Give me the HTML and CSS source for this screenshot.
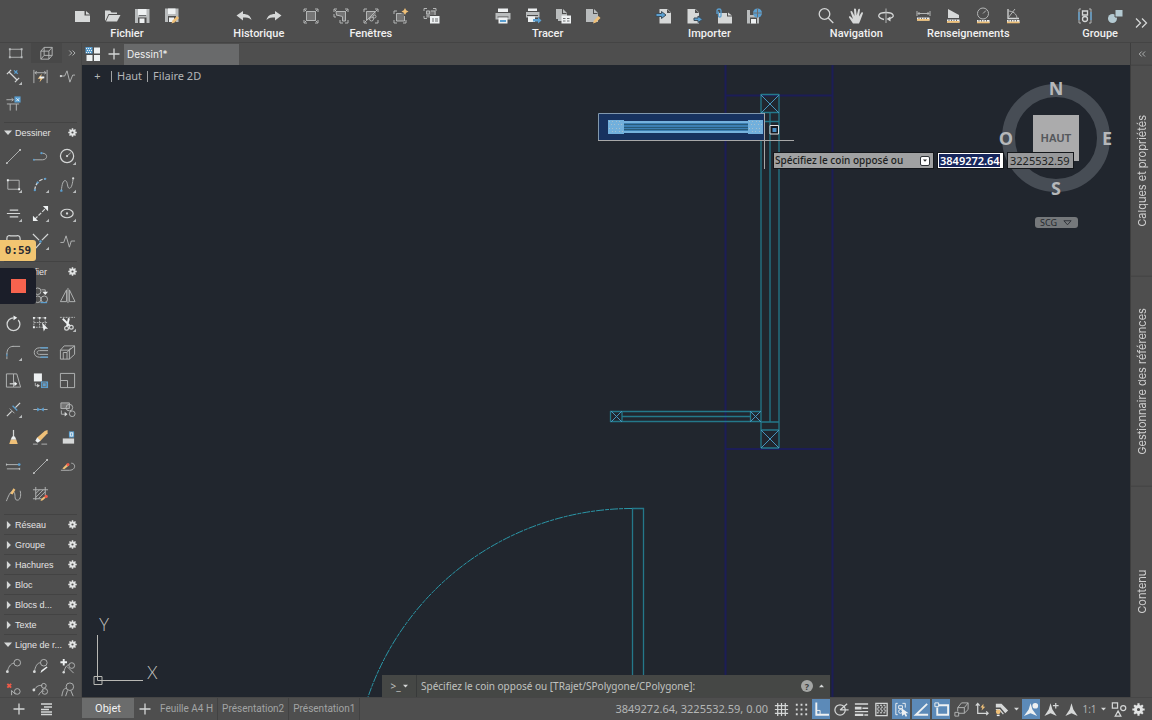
FILE: index.html
```html
<!DOCTYPE html>
<html lang="fr">
<head>
<meta charset="utf-8">
<title>Dessin1</title>
<link rel="stylesheet" href="styles.css">
</head>
<body>
<svg class="sprite" aria-hidden="true">
  <defs>
    <!-- file -->
    <symbol id="new" viewBox="0 0 18 18"><path class="f" d="M2 4h9.500v4.500H17V15H2z"/><path class="f" d="M13 4l4 3.500h-4z"/></symbol>
    <symbol id="open" viewBox="0 0 18 18"><path class="f" d="M2 3.500h5l1.500 2H14V7H5.500L2.500 13.500H2z"/><path class="f" d="M6 8h11.500l-3.500 6.500H3z"/></symbol>
    <symbol id="save" viewBox="0 0 18 18"><path class="g" d="M2 2h14.500v14H2z"/><path class="w" d="M5 2h8.500v6H5z"/><path class="k" d="M5 10.500h8.500V16H5z"/><path class="w" d="M6.500 11.500h5V16h-5z"/><path class="s" d="M6 8.500h7"/></symbol>
    <symbol id="saveas" viewBox="0 0 18 18"><path class="g" d="M2 1.500h13.500v13.500H2z"/><path class="w" d="M5 1.500h7.500v5.500H5z"/><path class="k" d="M5 9h8v6H5z"/><path class="w" d="M6 10.500h5V15H6z"/><path class="o" d="M8.500 16.500l1-3 4.500-4.500 2 2-4.500 4.500z"/></symbol>
    <symbol id="undo" viewBox="0 0 18 18"><path class="f" d="M1.500 8.500L8 4v3c5 0 7.500 2 8.500 6-2.500-2.500-5-2.500-8.500-2.500v3z"/></symbol>
    <symbol id="redo" viewBox="0 0 18 18"><path class="f" d="M16.500 8.500L10 4v3c-5 0-7.500 2-8.500 6 2.500-2.500 5-2.500 8.500-2.500v3z"/></symbol>
    <!-- viewports -->
    <symbol id="vp1" viewBox="0 0 18 18"><path class="d" d="M4.500 4.500h9v9h-9z"/><path class="l" d="M2 5V2h3M13 2h3v3M16 13v3h-3M5 16H2v-3M2.500 2.500l2 2M15.500 2.500l-2 2M15.500 15.500l-2-2M2.500 15.500l2-2M4.500 4.500h9v9h-9z"/></symbol>
    <symbol id="vp2" viewBox="0 0 18 18"><path class="d" d="M4 4h10v10h-3V9H4z"/><path class="l" d="M2 5V2h3M13 2h3v3M16 13v3h-3M2 7v3h2M4 4.500h9.500V14h-3V9.500L4.500 8zM8 13v3h3M2.500 2.500l2 2M15.500 2.500l-2 2"/></symbol>
    <symbol id="vp3" viewBox="0 0 18 18"><path class="d" d="M4 4h10v3l-5 5-5 2z"/><path class="l" d="M2 5V2h3M13 2h3v3M16 13v3h-3M5 16H2v-3M4.500 13.500v-9h9L4.500 13.500zM15.500 2.500l-2 2M2.500 15.500l2-2"/><circle class="l" cx="9.500" cy="12" r="2"/><circle class="l" cx="12.500" cy="9.500" r="1.500"/></symbol>
    <symbol id="vp4" viewBox="0 0 18 18"><path class="d" d="M4 6h8v8H4z"/><path class="l" d="M2 7V4h3M14 13v3h-3M5 16H2v-3M4.500 6.500h5M12.500 9v5h-8V6.500"/><path class="o" d="M13 1l1.200 2.300L16.500 4.500l-2.300 1.200L13 8l-1.200-2.300L9.500 4.500l2.300-1.200z"/></symbol>
    <symbol id="vp5" viewBox="0 0 18 18"><path class="d" d="M4 3.500h10V8H8v3H4z"/><path class="l" d="M2 4V1.500h3M11 1.500h3V4M2 9v2.500h3M4.500 4h3v3h-3zM9 4h4v4M4.500 9h3"/><path class="w" d="M8 9h9.500v7.500H8z"/><path class="s" d="M10 12h2M13 12h3M10 14h2M13 14h3"/></symbol>
    <!-- plot -->
    <symbol id="print" viewBox="0 0 18 18"><path class="w" d="M4 1.500h10V5H4z"/><path class="g" d="M1.500 6h15v6.500h-15z"/><path class="k" d="M3.500 9.500h11v1h-11z"/><path class="w" d="M4.500 10.500h9v6h-9z"/><path class="b" d="M6 13h6v2H6z"/></symbol>
    <symbol id="print2" viewBox="0 0 18 18"><path class="w" d="M4 1.500h9V4H4z"/><path class="g" d="M2 5h13.500v5.500H2z"/><path class="k" d="M3 8h11v1H3z"/><path class="w" d="M4 9.500h7v5.500H4z"/><path class="b" d="M9 12h5v-2l3.500 3.500L14 16.500v-2H9z"/></symbol>
    <symbol id="page" viewBox="0 0 18 18"><path class="g" d="M2 2h7l4 4v8H4V12H2z"/><path class="k" d="M9 2v4h4l-1 1H8V2z"/><path class="w" d="M7.500 8.500h9.500v8H7.500z"/><path class="s" d="M9 11.500h2.500M13 11.500h2.500M9 14h2.500M13 14h2.500"/></symbol>
    <symbol id="pageedit" viewBox="0 0 18 18"><path class="g" d="M2 2h8l4 4v9H2z"/><path class="k" d="M10 2v4h4l-1 1H9V2z"/><path class="o" d="M9 16.500l1-3 4.500-4.500 2 2-4.500 4.500z"/></symbol>
    <!-- import -->
    <symbol id="imp" viewBox="0 0 18 18"><path class="f" d="M4.500 2h8l3.500 3.500V16.500H4.500z"/><path class="k" d="M12 2v4h4z"/><path class="bo" d="M1 6.500h5.500v-2L11 8l-4.500 3.500v-2H1z"/></symbol>
    <symbol id="exp" viewBox="0 0 18 18"><path class="f" d="M2.500 2h8l3.500 3.500V16.500H2.500z"/><path class="k" d="M10 2v4h4z"/><path class="bo" d="M9 11h4V9l4.500 3.500L13 15.500v-2H9z"/></symbol>
    <symbol id="attach" viewBox="0 0 18 18"><path class="f" d="M3 6h9v3.500h5v7H3z"/><path class="f" d="M13 5.500L17 8.500h-4z"/><path class="bl" d="M2 7V3.500c0-2 4-2 4 0V9c0 1.500-2.500 1.500-2.500 0V4.500"/></symbol>
    <symbol id="saveweb" viewBox="0 0 18 18"><path class="g" d="M2 3h12v13.500H2z"/><path class="k" d="M5 3h6v5H5zM5 10.500h7v6H5z"/><path class="w" d="M6 12h5v4.500H6z"/><circle class="b" cx="12.500" cy="6" r="4.500"/><path class="s" d="M8 6h9M12.500 1.500v9"/></symbol>
    <!-- navigation -->
    <symbol id="lens" viewBox="0 0 18 18"><circle class="t" cx="7.500" cy="7" r="5.300"/><path class="t" d="M11.300 11l5 5"/></symbol>
    <symbol id="hand" viewBox="0 0 18 18"><path class="f" d="M6 16.500L2 10.500c-.5-1.200.8-1.700 1.500-1L6 12 3.500 5c-.2-1.200 1.300-1.500 1.700-.4L7.500 9 7 2.500C7 1.200 8.700 1 9 2.300L9.700 8.500l1.500-6c.4-1.200 2-.8 1.700.5L12 9.500l2.300-3.800c.7-1 2-.3 1.600.8L13.500 13l-1.500 3.500z"/></symbol>
    <symbol id="orbit" viewBox="0 0 18 18"><path class="t" d="M7 12.500C-1.500 10.500 1 5.500 9 5.500s10.500 5 2 6.500"/><path class="l" d="M9 1.500V16"/><path class="f" d="M13.500 9.500v5L9.500 12z"/></symbol>
    <!-- inquiry -->
    <symbol id="dist" viewBox="0 0 18 18"><path class="l" d="M3 4v5M16 4v5M4 6.500h11M5.500 5L4 6.500 5.500 8M13.500 5L15 6.500 13.500 8"/><use href="#ruler"/></symbol>
    <symbol id="area" viewBox="0 0 18 18"><path class="f" d="M4 2l11 6v3H4z"/><use href="#ruler" y="2"/></symbol>
    <symbol id="radius" viewBox="0 0 18 18"><circle class="l" cx="9" cy="6.500" r="5.500"/><path class="l" d="M9 6.500l3-3"/><use href="#ruler" y="2.500"/></symbol>
    <symbol id="angle" viewBox="0 0 18 18"><path class="t" d="M4 2v9.500h11"/><path class="l" d="M4 4c5 0 9 3 9 7.500M4 11L11 2"/><use href="#ruler" y="2.500"/></symbol>
    <g id="ruler"><path class="w" d="M3 10.500h12.500v3H3z"/><path class="o" d="M3 12h12.500v1.800H3z"/><path class="s" d="M5 10.500v1.500M7.500 10.500v1.500M10 10.500v1.500M12.500 10.500v1.500"/></g>
    <!-- groups -->
    <symbol id="group" viewBox="0 0 18 18"><path class="l" d="M5 2H3v14h2M13 2h2v14h-2"/><path class="bl" d="M3 5v8M15 5v8"/><path class="t" d="M6.500 4h5v4h-5z"/><circle class="t" cx="9" cy="12" r="2.500"/></symbol>
    <symbol id="ungroup" viewBox="0 0 18 18"><circle class="pb" cx="6.500" cy="11.500" r="4.500"/><path class="pb st" d="M9 2.500h8v7.500H9z"/></symbol>
    <!-- palette -->
    <symbol id="p-rect" viewBox="0 0 18 18"><path class="l" d="M3 4.500h12.500v8.500H3z"/><path class="g" d="M2 3.500h2v2H2zM14.500 3.500h2v2h-2zM2 12h2v2H2zM14.500 12h2v2h-2z"/></symbol>
    <symbol id="p-cube" viewBox="0 0 18 18"><path class="l" d="M3 6.500h8.500V15H3zM3 6.500l3.500-4H15l-3.500 4M15 2.500V11l-3.500 4M6.500 2.500V11H15M6.500 11L3 15"/></symbol>
    <symbol id="p-dim" viewBox="0 0 18 18"><path class="t" d="M4.500 4.500l8 8M2 6.500L6.500 2M10.500 15l4.500-4.500"/><path class="bl" d="M9.500 2.500l4 3.500M13 2.500L10 6"/><use href="#more"/></symbol>
    <symbol id="p-quick" viewBox="0 0 18 18"><path class="l" d="M2 2v14M16 2v14M3 5h12M5 3.500L3 5l2 1.500M13 3.500L15 5l-2 1.500"/><path class="o" d="M10.500 6L6 11.500h3L8 15l4.500-5.500H9.500z"/><path class="w" d="M8 9h5v2H8z"/></symbol>
    <symbol id="p-jog" viewBox="0 0 18 18"><path class="l" d="M2 8.500h4L8.500 3l3 12 3-7.500H17"/><circle class="f" cx="2" cy="8.500" r="1.200"/></symbol>
    <symbol id="p-space" viewBox="0 0 18 18"><path class="l" d="M1.500 5h7M7 3.500L9 5 7 6.500M2 9.500h13M5.500 9.500v7M12 9.500v7"/><path class="b" d="M10 1.500h6.500v6.500H10z"/><path class="lw" d="M12 3.500l3 3M15 3.500l-3 3"/></symbol>
    <path id="more" class="g" d="M18 14.500V18h-3.500z"/>
    <symbol id="p-line" viewBox="0 0 18 18"><path class="l" d="M2 16L16 2"/><circle class="f" cx="16" cy="2" r="1"/><circle class="f" cx="2" cy="16" r="1"/></symbol>
    <symbol id="p-pline" viewBox="0 0 18 18"><path class="l" d="M2 12.500h9c6 0 6-7 0-7"/><circle class="b" cx="10" cy="5.500" r="1.200"/><circle class="b" cx="2" cy="12.500" r="1"/></symbol>
    <symbol id="p-circle" viewBox="0 0 18 18"><circle class="t" cx="8.500" cy="8.500" r="7"/><path class="l" d="M8.500 8.500l4-3.500"/><circle class="f" cx="8.500" cy="8.500" r="1.200"/><use href="#more"/></symbol>
    <symbol id="p-box" viewBox="0 0 18 18"><path class="l" d="M3 4.500h12V14H3z"/><path class="w" d="M2 3.500h2v2H2zM14 13h2v2h-2z"/><use href="#more"/></symbol>
    <symbol id="p-arc" viewBox="0 0 18 18"><path class="t" d="M3 15C3 9 8 3 14 3" stroke-dasharray="4 1.500"/><circle class="b" cx="3" cy="15" r="1.200"/><circle class="b" cx="6" cy="7" r="1.200"/><circle class="b" cx="14" cy="3" r="1.200"/><use href="#more"/></symbol>
    <symbol id="p-spline" viewBox="0 0 18 18"><path class="l" d="M2.500 15.500C3 9 4.500 4 7 5s1.500 8 4 8 3.500-6 4-11"/><circle class="b" cx="2.500" cy="15.500" r="1.300"/><circle class="f" cx="15" cy="2.500" r="1.200"/><use href="#more"/></symbol>
    <symbol id="p-mline" viewBox="0 0 18 18"><path class="t" d="M5 5.500h9M2 9h14M5 12.500h9"/><use href="#more"/></symbol>
    <symbol id="p-ray" viewBox="0 0 18 18"><path class="t" d="M3 15L15 3" stroke-dasharray="4 1.500"/><path class="w" d="M17 1v5.500L11.500 1zM1 17v-5.500L6.500 17z"/><use href="#more"/></symbol>
    <symbol id="p-ell" viewBox="0 0 18 18"><ellipse class="t" cx="8.500" cy="9" rx="6.500" ry="4.500"/><circle class="f" cx="8.500" cy="9" r="1.200"/><use href="#more"/></symbol>
    <symbol id="p-rev" viewBox="0 0 18 18"><path class="t" d="M2 8V5.500C2 2.500 5 2.500 6 3h6c2-.5 4 0 4 3v6c0 3-3 3-4 3H5c-3 0-3-2-3-3z"/></symbol>
    <symbol id="p-point" viewBox="0 0 18 18"><path class="t" d="M1 1l6.500 6.500M17 1l-6.500 6.500M9 10.500L4 16"/><circle class="b" cx="9" cy="9" r="1.300"/><use href="#more"/></symbol>
    <symbol id="p-wave" viewBox="0 0 18 18"><path class="l" d="M1.500 10H5l2.500-7 3.500 12 2-6.500h4"/></symbol>
    <symbol id="p-move" viewBox="0 0 18 18"><path class="l" d="M9 2v14M2 9h14"/></symbol>
    <symbol id="p-copy" viewBox="0 0 18 18"><circle class="l" cx="6" cy="4.500" r="3.500"/><circle class="l" cx="6" cy="13" r="3.500"/><circle class="l" cx="13" cy="13" r="3.500"/><path class="l" d="M10 3h4v3"/><path class="w" d="M11 5h6l-3 3.500z"/><path class="bl" d="M9 16.500h7"/></symbol>
    <symbol id="p-mirror" viewBox="0 0 18 18"><path class="l" d="M8 3L1.500 15.500H8zM11 3l6 12.500h-6zM9.500 1v16"/></symbol>
    <symbol id="p-rot" viewBox="0 0 18 18"><path class="t" d="M9 3a6.800 6.800 0 1 0 6.800 6.800c0-1.800-.8-3.300-1.800-4.500"/><path class="w" d="M9 .5l4 2.500-4 2.500z"/></symbol>
    <symbol id="p-stretch" viewBox="0 0 18 18"><path class="l" stroke-dasharray="2 1" d="M2 3h12v10H2zM2 8h14M8 3v10"/><path class="w" d="M1 2h2v2H1zM13 2h2v2h-2zM1 12h2v2H1zM7 2h2v2H7zM10.500 8l6.500 6.500h-3L12.500 17.500z"/></symbol>
    <symbol id="p-trim" viewBox="0 0 18 18"><path class="l" stroke-dasharray="2 1" d="M1 2.500h16"/><path class="tw" d="M4 4l8 8M10.500 3.500L8.500 12"/><circle class="t" cx="8" cy="14" r="2"/><circle class="t" cx="13" cy="13" r="2"/><use href="#more"/></symbol>
    <symbol id="p-fillet" viewBox="0 0 18 18"><path class="l" d="M2 16v-3M8 2.500h8"/><path class="bl" d="M2 13V10"/><path class="l" d="M2 11C2 6 4 2.500 9 2.500"/><use href="#more"/></symbol>
    <symbol id="p-offset" viewBox="0 0 18 18"><path class="l" d="M17 4H8C.5 4 .5 14 8 14h9M17 7H8c-3.500 0-3.500 4 0 4h9"/><path class="bl" d="M9 4h8M9 14h8"/></symbol>
    <symbol id="p-solid" viewBox="0 0 18 18"><path class="l" d="M1.500 6.500H11V16H1.500zM1.500 6.500l4-4.500H16.500L11 6.500M16.500 2v9L11 16M4.500 16V9h4v7M8.500 9l4-5"/></symbol>
    <symbol id="p-taper" viewBox="0 0 18 18"><path class="l" d="M1.500 2H9v14H1.500zM9 2h3.500l4 14H9"/><path class="t" d="M5 12.500h7"/><path class="w" d="M10 10l3 2.500-3 2.500z"/></symbol>
    <symbol id="p-block" viewBox="0 0 18 18"><path class="w" d="M2 1.500h8.500v8.500H2z"/><path class="b" d="M9.500 10h7.500v7H9.500z"/><path class="l" d="M3.500 11.500v3H7"/><path class="f" d="M5.500 12.500l3 2-3 2z"/><path class="s" d="M11 11.500h4v4h-4z"/></symbol>
    <symbol id="p-scale" viewBox="0 0 18 18"><path class="l" d="M1.500 1.500h15v15h-15zM1.500 9h7.500v7.500"/></symbol>
    <symbol id="p-break" viewBox="0 0 18 18"><path class="t" d="M2 16l5-5M11 7l5-5"/><path class="bl" d="M8 5l5 5"/><path class="l" d="M5 8l5 5"/><use href="#more"/></symbol>
    <symbol id="p-join" viewBox="0 0 18 18"><path class="l" d="M1.500 9h15"/><path class="b" d="M5.500 7L9 9l-3.500 2zM12.500 7L9 9l3.500 2z"/></symbol>
    <symbol id="p-align" viewBox="0 0 18 18"><path class="d" d="M2 2h9v6H2z"/><path class="l" d="M2 2h9v6H2zM2.500 10v4H8"/><circle class="l" cx="11" cy="7" r="3.500"/><circle class="l" cx="14" cy="13.500" r="3"/><path class="f" d="M6 11.500l3 2.500-3 2.500z"/></symbol>
    <symbol id="p-brush" viewBox="0 0 18 18"><path class="t" d="M9 1v8"/><path class="w" d="M7.500 8h3l1.500 3.500H6z"/><path class="o" d="M6 11.500h6l1.500 4.500h-9z"/></symbol>
    <symbol id="p-erase" viewBox="0 0 18 18"><path class="o" d="M5 9.500L13.500 2 16.500 1v3.500L8.500 13z"/><path class="w" d="M3.500 12.500l2-3.500 3.500 3.500-3 2z"/><path class="l" d="M1 16h5M10 16h6"/></symbol>
    <symbol id="p-ext" viewBox="0 0 18 18"><path class="f" d="M4 10h12v5.500H4z"/><path class="b" d="M10.500 2.500H16V9h-5.500z"/><path class="lw" d="M12 4h2.500v3.500H12z"/></symbol>
    <symbol id="p-over" viewBox="0 0 18 18"><path class="l" d="M2 7h12M2 11.500h14"/><path class="g" d="M1 5.500l2 1.500-2 1.500zM16 10l-2 1.500 2 1.500z"/><circle class="b" cx="15" cy="7" r="1.500"/></symbol>
    <symbol id="p-pedit" viewBox="0 0 18 18"><path class="l" d="M2 13h9c7 0 7-7.500 2-7.500"/><path class="o" d="M3.500 11l5-5 2 2-5 4z"/><circle class="r" cx="9.500" cy="7" r="1.600"/></symbol>
    <symbol id="p-sedit" viewBox="0 0 18 18"><path class="l" d="M1.500 16C3 12 6 4 9 6s0 9 4 9 4-7 3-10"/><path class="o" d="M5.500 8L9 2.500 11 4 8 9z"/></symbol>
    <symbol id="p-hatch" viewBox="0 0 18 18"><path class="l" d="M4 1v14M14 1v9M1 4h16M1 13.500h9M4 8l4-4M4 12l8-8M7 13l7-7"/><path class="o" d="M9 16l1-2.500 3-2.500 1.500 1.500-3 2.500z"/><circle class="r" cx="15" cy="11" r="1.700"/></symbol>
    <symbol id="p-lead" viewBox="0 0 18 18"><path class="l" d="M2.500 14.500C3.500 10 5.500 6 9.500 5.500"/><circle class="l" cx="13" cy="5" r="3.500"/><circle class="f" cx="2.500" cy="14.500" r="1.500"/></symbol>
    <symbol id="p-leadedit" viewBox="0 0 18 18"><path class="l" d="M2.500 14.500C3.500 9 5.500 5 9 5"/><circle class="l" cx="12.500" cy="5" r="3.500"/><circle class="f" cx="2.500" cy="14.500" r="1.500"/><path class="w" d="M9 16l1-3 5.500-4 1 1-5 4z"/></symbol>
    <symbol id="p-leadadd" viewBox="0 0 18 18"><path class="tw" d="M5 1v7M1.500 4.500h7"/><path class="l" d="M5 15C7 8 9 7 11 7.500M8.500 9l7 7"/><circle class="l" cx="13.500" cy="8" r="3"/><circle class="f" cx="5" cy="15" r="1.300"/></symbol>
    <symbol id="p-leaddel" viewBox="0 0 18 18"><path class="rl" d="M2.500 2l4 4M6.500 2l-4 4"/><path class="l" d="M7 14V9l4 4"/><circle class="l" cx="13" cy="10" r="3"/></symbol>
    <symbol id="p-leadal" viewBox="0 0 18 18"><path class="l" d="M2 8.500C5 4 8 3 11 4M7 14c2-4 4-5 6-4"/><circle class="l" cx="12.500" cy="4" r="2.500"/><circle class="l" cx="13.500" cy="10" r="3"/><circle class="f" cx="2" cy="8.500" r="1.500"/></symbol>
    <symbol id="p-leadcol" viewBox="0 0 18 18"><path class="l" d="M3 15C4 8 6 6 8 7M9 9l-2 6M12.500 9l2.500 6"/><circle class="l" cx="11.500" cy="5" r="4"/></symbol>
    <symbol id="gear" viewBox="0 0 18 18"><path class="teeth" d="M9 .5v17M.5 9h17M3 3l12 12M15 3L3 15"/><circle class="hub" cx="9" cy="9" r="4.200"/></symbol>
    <symbol id="tri-r" viewBox="0 0 6 10"><path class="f" d="M1 0l5 5-5 5z"/></symbol>
    <symbol id="tri-d" viewBox="0 0 10 6"><path class="f" d="M0 .5h10L5 6z"/></symbol>
    <symbol id="plus" viewBox="0 0 18 18"><path class="t" d="M9 3.500v11M3.500 9h11"/></symbol>
    <symbol id="tiles" viewBox="0 0 18 18"><path class="b" d="M1.500 2h7v6.500h-7z"/><path class="w" d="M10 2.500h6v6h-6zM2.500 10h6v6h-6zM10 10h6v6h-6z"/><path class="lw" stroke-dasharray="1 1" d="M2 3.500h6M3 5.500h6M2 7.500h6"/></symbol>
    <symbol id="dbl-r" viewBox="0 0 18 18"><path class="t" d="M4 4.500L8.500 9 4 13.500M10 4.500l4.500 4.500L10 13.500"/></symbol>
    <symbol id="dbl-l" viewBox="0 0 18 18"><path class="t" d="M8.500 4.500L4 9l4.500 4.500M14.500 4.500L10 9l4.500 4.500"/></symbol>
    <symbol id="list" viewBox="0 0 18 18"><path class="t" d="M4 4h11M7 7h8M4 9.500h8M4 12h11M4 14.500h11"/></symbol>
    <!-- status bar -->
    <symbol id="s-grid" viewBox="0 0 18 18"><path class="t" d="M2 5h14M2 9h14M2 13h14M5 2v14M9 2v14M13 2v14"/></symbol>
    <symbol id="s-snap" viewBox="0 0 18 18"><path class="td" d="M3 4h13M3 9h13M3 14h13"/></symbol>
    <symbol id="s-ortho" viewBox="0 0 18 18"><path class="tw" d="M3.500 1.500v13H17"/><path class="lw" d="M3.500 10h4v4"/></symbol>
    <symbol id="s-polar" viewBox="0 0 18 18"><circle class="t" cx="7.500" cy="9.500" r="5.500"/><path class="t" d="M7.500 9.500L15 3M7.500 9.500h9"/></symbol>
    <symbol id="s-lw" viewBox="0 0 18 18"><path class="f" d="M2 2.500h14v1.500H2zM2 6h7v3H2zM10 7h6v1.500h-6zM2 10.500h14V12H2zM2 13.500h9V16H2zM12 14h4v1.500h-4z"/></symbol>
    <symbol id="s-trans" viewBox="0 0 18 18"><path class="t" d="M3 2.500h12v13H3z"/><path class="lw" stroke-dasharray="2 1.500" d="M4 4.500h10M5 6.500h9M4 8.500h10M5 10.500h9M4 12.500h10"/></symbol>
    <symbol id="s-sel" viewBox="0 0 18 18"><path class="lw" d="M5 2.500H3v12h2M10 2.500h3V7M6 5h4v3H6z"/><circle class="lw" cx="8" cy="11" r="2"/><path class="w" d="M9.500 8l7 5h-3l1.500 3-1.500.8L12 14l-2.500 2z"/></symbol>
    <symbol id="s-ang" viewBox="0 0 18 18"><path class="tw" d="M15 3L3 14.500h13"/></symbol>
    <symbol id="s-osnap" viewBox="0 0 18 18"><path class="tw" d="M6 4.500h10v10H4.500V7"/><path class="lw" d="M2 2h4v4H2z"/></symbol>
    <symbol id="s-3d" viewBox="0 0 18 18"><path class="l" d="M5 7h7v6H6M5 7l4-5h7l-4 5M16 2v7l-4 4M5 7v4"/><path class="l" d="M2 12h4v4H2z"/></symbol>
    <symbol id="s-ucs" viewBox="0 0 18 18"><path class="t" d="M5 3v10h11M3 5l2-2.500L7 5M14 11l2 2-2 2"/><path class="o" d="M11 3L8 7h2l-1 3 4-4h-2z"/></symbol>
    <symbol id="s-note" viewBox="0 0 18 18"><path class="f" d="M3 3h6l7 7-3 3-5-6H3z"/><path class="t" d="M3 9h4l4 5"/><circle class="o" cx="5.500" cy="11.500" r="2.500"/><path class="w" d="M4 14.500h3V16H4z"/></symbol>
    <symbol id="s-man" viewBox="0 0 18 18"><path class="f" d="M9 2.500l2 6.500 4.500 7L9 13l-6.500 3L7 9z"/></symbol>
    <symbol id="s-man1" viewBox="0 0 18 18"><path class="w" d="M8 2.500l2 6.500 5 7-7-3-7 3 5-7z"/><circle class="w" cx="13" cy="5" r="3"/></symbol>
    <symbol id="s-man2" viewBox="0 0 18 18"><path class="f" d="M8 2.500l2 6.500 4.500 7L8 13l-6.500 3L6 9z"/><path class="t" d="M13.500 2v6M10.500 5h6"/></symbol>
    <symbol id="s-iso" viewBox="0 0 18 18"><path class="t" d="M2.500 2h5.500v5.500H2.500zM8.500 10.500l3 5.500h-6z"/><circle class="t" cx="14" cy="7.500" r="2.700"/></symbol>
  </defs>
</svg>

<header class="toolbar">
  <div class="cluster">
    <section class="tool-group"><div class="tools"><button><svg><use href="#new"/></svg></button><button><svg><use href="#open"/></svg></button><button><svg><use href="#save"/></svg></button><button><svg><use href="#saveas"/></svg></button></div><h2>Fichier</h2></section>
  </div>
  <div class="cluster">
    <section class="tool-group"><div class="tools"><button><svg><use href="#undo"/></svg></button><button><svg><use href="#redo"/></svg></button></div><h2>Historique</h2></section>
    <section class="tool-group"><div class="tools"><button><svg><use href="#vp1"/></svg></button><button><svg><use href="#vp2"/></svg></button><button><svg><use href="#vp3"/></svg></button><button><svg><use href="#vp4"/></svg></button><button><svg><use href="#vp5"/></svg></button></div><h2>Fenêtres</h2></section>
  </div>
  <div class="cluster">
    <section class="tool-group"><div class="tools"><button><svg><use href="#print"/></svg></button><button><svg><use href="#print2"/></svg></button><button><svg><use href="#page"/></svg></button><button><svg><use href="#pageedit"/></svg></button></div><h2>Tracer</h2></section>
  </div>
  <div class="cluster">
    <section class="tool-group"><div class="tools"><button><svg><use href="#imp"/></svg></button><button><svg><use href="#exp"/></svg></button><button><svg><use href="#attach"/></svg></button><button><svg><use href="#saveweb"/></svg></button></div><h2>Importer</h2></section>
  </div>
  <div class="cluster">
    <section class="tool-group"><div class="tools"><button><svg><use href="#lens"/></svg></button><button><svg><use href="#hand"/></svg></button><button><svg><use href="#orbit"/></svg></button></div><h2>Navigation</h2></section>
    <section class="tool-group"><div class="tools"><button><svg><use href="#dist"/></svg></button><button><svg><use href="#area"/></svg></button><button><svg><use href="#radius"/></svg></button><button><svg><use href="#angle"/></svg></button></div><h2>Renseignements</h2></section>
  </div>
  <div class="cluster">
    <section class="tool-group"><div class="tools"><button><svg><use href="#group"/></svg></button><button><svg><use href="#ungroup"/></svg></button></div><h2>Groupe</h2></section>
  </div>
  <button class="overflow" aria-label="Plus d'outils"><svg><use href="#dbl-r"/></svg></button>
</header>

<div class="workspace">
  <aside class="palette">
    <div class="palette-tabs"><button><svg><use href="#p-rect"/></svg></button><button class="shade"><svg><use href="#p-cube"/></svg></button><button class="chev"><svg><use href="#dbl-r"/></svg></button></div>
    <div class="icon-grid rows-2"><button><svg><use href="#p-dim"/></svg></button><button><svg><use href="#p-quick"/></svg></button><button><svg><use href="#p-jog"/></svg></button><button><svg><use href="#p-space"/></svg></button></div>
    <h3 class="pal-head"><svg class="tri-d"><use href="#tri-d"/></svg><span>Dessiner</span><button><svg><use href="#gear"/></svg></button></h3>
    <div class="icon-grid rows-4">
      <button><svg><use href="#p-line"/></svg></button><button><svg><use href="#p-pline"/></svg></button><button><svg><use href="#p-circle"/></svg></button>
      <button><svg><use href="#p-box"/></svg></button><button><svg><use href="#p-arc"/></svg></button><button><svg><use href="#p-spline"/></svg></button>
      <button><svg><use href="#p-mline"/></svg></button><button><svg><use href="#p-ray"/></svg></button><button><svg><use href="#p-ell"/></svg></button>
      <button><svg><use href="#p-rev"/></svg></button><button><svg><use href="#p-point"/></svg></button><button><svg><use href="#p-wave"/></svg></button>
    </div>
    <h3 class="pal-head"><svg class="tri-d"><use href="#tri-d"/></svg><span>Modifier</span><button><svg><use href="#gear"/></svg></button></h3>
    <div class="icon-grid rows-8">
      <button><svg><use href="#p-move"/></svg></button><button><svg><use href="#p-copy"/></svg></button><button><svg><use href="#p-mirror"/></svg></button>
      <button><svg><use href="#p-rot"/></svg></button><button><svg><use href="#p-stretch"/></svg></button><button><svg><use href="#p-trim"/></svg></button>
      <button><svg><use href="#p-fillet"/></svg></button><button><svg><use href="#p-offset"/></svg></button><button><svg><use href="#p-solid"/></svg></button>
      <button><svg><use href="#p-taper"/></svg></button><button><svg><use href="#p-block"/></svg></button><button><svg><use href="#p-scale"/></svg></button>
      <button><svg><use href="#p-break"/></svg></button><button><svg><use href="#p-join"/></svg></button><button><svg><use href="#p-align"/></svg></button>
      <button><svg><use href="#p-brush"/></svg></button><button><svg><use href="#p-erase"/></svg></button><button><svg><use href="#p-ext"/></svg></button>
      <button><svg><use href="#p-over"/></svg></button><button><svg><use href="#p-line"/></svg></button><button><svg><use href="#p-pedit"/></svg></button>
      <button><svg><use href="#p-sedit"/></svg></button><button><svg><use href="#p-hatch"/></svg></button>
    </div>
    <h3 class="pal-head"><svg class="tri-r"><use href="#tri-r"/></svg><span>Réseau</span><button><svg><use href="#gear"/></svg></button></h3>
    <h3 class="pal-head"><svg class="tri-r"><use href="#tri-r"/></svg><span>Groupe</span><button><svg><use href="#gear"/></svg></button></h3>
    <h3 class="pal-head"><svg class="tri-r"><use href="#tri-r"/></svg><span>Hachures</span><button><svg><use href="#gear"/></svg></button></h3>
    <h3 class="pal-head"><svg class="tri-r"><use href="#tri-r"/></svg><span>Bloc</span><button><svg><use href="#gear"/></svg></button></h3>
    <h3 class="pal-head"><svg class="tri-r"><use href="#tri-r"/></svg><span>Blocs d...</span><button><svg><use href="#gear"/></svg></button></h3>
    <h3 class="pal-head"><svg class="tri-r"><use href="#tri-r"/></svg><span>Texte</span><button><svg><use href="#gear"/></svg></button></h3>
    <h3 class="pal-head"><svg class="tri-d"><use href="#tri-d"/></svg><span>Ligne de r...</span><button><svg><use href="#gear"/></svg></button></h3>
    <div class="icon-grid rows-last"><button><svg><use href="#p-lead"/></svg></button><button><svg><use href="#p-leadedit"/></svg></button><button><svg><use href="#p-leadadd"/></svg></button><button><svg><use href="#p-leaddel"/></svg></button><button><svg><use href="#p-leadal"/></svg></button><button><svg><use href="#p-leadcol"/></svg></button></div>
  </aside>

  <main class="document">
    <nav class="doc-tabs"><button><svg><use href="#tiles"/></svg></button><button><svg><use href="#plus"/></svg></button><a class="doc-tab" href="#dessin1">Dessin1*</a></nav>
    <div class="canvas" id="dessin1">
      <svg class="drawing">
        <g transform="translate(-82 -65)">
          <path class="axis" d="M725.500 65v632M832.500 65v632M725 95.500h108M725 449h108"/>
          <path class="wall" d="M761 94v354M779 94v354M770 113v309M761 94.500h18M761 112.500h18M765 121.500h14M761 422h18M761 430h18M761 448h18"/>
          <path class="wall" d="M610 411.500h151M610 421.500h151M622 416.500h128M610.500 411v11M622 411v11M750.500 411v11"/>
          <path class="wall" d="M632.500 697V508.500h11V697"/>
          <path class="swing" d="M632 508.500A279 279 0 0 0 368 697"/>
          <path class="brace" d="M761 95l18 18M779 95l-18 18M761 430l18 18M779 430l-18 18M611 411l11 11M622 411l-11 11M750 411l11 11M761 411l-11 11"/>
          <path class="window-sel" d="M598.500 113.500h166v27h-166z"/>
          <path class="glow" d="M623 121h126v12H623z"/>
          <path class="glow-line" d="M623 122h126M623 132h126"/>
          <path class="glow-dark" d="M623 124.500h126M623 127.500h126M623 129.500h126"/>
          <path class="grip" d="M608 120h16v14h-16zM748 120h15v14h-15z"/>
          <path class="grain" d="M609 121.500h14M611 124.500h12M609 128.500h14M612 131.500h11M749 121.500h13M751 124.500h11M749 128.500h13M752 131.500h10"/>
          <path class="cross" d="M764.500 113v56M598 140.500h196"/>
          <path class="pick" d="M770 125.500h8.500v8.500H770z"/>
          <path class="pick-dot" d="M772.500 128h4v4h-4z"/>
          <path class="ucs" d="M97.500 635v45.500H143M94 676.500h8v8h-8z"/>
          <text class="ucs-t" x="99" y="631">Y</text>
          <text class="ucs-t" x="147" y="679">X</text>
        </g>
      </svg>
      <div class="view-label"><button>+</button><i></i><button>Haut</button><i></i><button>Filaire 2D</button></div>
      <div class="viewcube">
        <svg viewBox="0 0 124 124"><circle class="ring" cx="62" cy="62" r="47.500"/><path class="face" d="M39 39h46v46H39z"/><g class="dir"><text x="62" y="19">N</text><text x="62" y="119">S</text><text x="12" y="69">O</text><text x="113" y="69">E</text></g><text class="face-t" x="62" y="66">HAUT</text></svg>
        <button class="ucs-pick">SCG<svg viewBox="0 0 10 6"><path d="M1 .5h8L5 5z"/></svg></button>
      </div>
      <div class="dyn-input">
        <label class="prompt" for="dyn-x">Spécifiez le coin opposé ou <button aria-label="Options"><svg class="tri-d"><use href="#tri-d"/></svg></button></label>
        <span class="field active"><input id="dyn-x" value="3849272.64"></span>
        <span class="field"><input aria-label="Y" value="3225532.59"></span>
      </div>
      <div class="command">
        <button class="cmd-menu">&gt;_<svg class="caret"><use href="#tri-d"/></svg></button>
        <label for="cmd">Spécifiez le coin opposé ou [TRajet/SPolygone/CPolygone]:</label>
        <input id="cmd">
        <button class="help">?</button>
        <button class="up" aria-label="Historique"><svg class="caret flip"><use href="#tri-d"/></svg></button>
      </div>
    </div>
  </main>

  <aside class="dock">
    <button class="dock-open" aria-label="Ouvrir"><svg><use href="#dbl-l"/></svg></button>
    <button class="dock-tab">Calques et propriétés</button>
    <button class="dock-tab">Gestionnaire des références</button>
    <button class="dock-tab">Contenu</button>
  </aside>
</div>

<footer class="status">
  <div class="pal-foot"><button><svg><use href="#plus"/></svg></button><button><svg><use href="#list"/></svg></button></div>
  <nav class="layouts"><a class="current" href="#objet">Objet</a><button><svg><use href="#plus"/></svg></button><a href="#a4h">Feuille A4 H</a><a href="#p2">Présentation2</a><a href="#p1">Présentation1</a></nav>
  <output class="coords">3849272.64, 3225532.59, 0.00</output>
  <div class="modes">
    <button><svg><use href="#s-grid"/></svg></button><button><svg><use href="#s-snap"/></svg></button><button class="on"><svg><use href="#s-ortho"/></svg></button><button><svg><use href="#s-polar"/></svg></button><button><svg><use href="#s-lw"/></svg></button><button><svg><use href="#s-trans"/></svg></button><button class="on"><svg><use href="#s-sel"/></svg></button><button class="on"><svg><use href="#s-ang"/></svg></button><button class="on"><svg><use href="#s-osnap"/></svg></button><button><svg><use href="#s-3d"/></svg></button><button><svg><use href="#s-ucs"/></svg></button><button><svg><use href="#s-note"/></svg></button><button class="slim"><svg class="caret"><use href="#tri-d"/></svg></button><button class="on"><svg><use href="#s-man1"/></svg></button><button><svg><use href="#s-man2"/></svg></button><button><svg><use href="#s-man"/></svg></button><button class="scale">1:1</button><button class="slim"><svg class="caret"><use href="#tri-d"/></svg></button><button><svg><use href="#s-iso"/></svg></button><button><svg class="cog"><use href="#gear"/></svg></button>
  </div>
</footer>

<div class="recorder"><time>0:59</time><button aria-label="Arrêter"><span></span></button></div>
</body>
</html>
```
FILE: styles.css
```css
* { box-sizing: border-box; }
body { margin: 0; height: 100vh; display: flex; flex-direction: column; overflow: hidden; background: #4e4e4e; color: #e4e4e4; font-family: Inter, "Liberation Sans", sans-serif; font-size: 11px; position: relative; }
button { background: none; border: 0; padding: 0; margin: 0; color: inherit; font: inherit; display: flex; align-items: center; justify-content: center; }
a { color: inherit; text-decoration: none; }
h2, h3 { margin: 0; font-weight: 500; }
input { border: 0; padding: 0; margin: 0; font: inherit; color: inherit; background: none; outline: 0; min-width: 0; }
svg { width: 18px; height: 18px; display: block; flex: none; }
.sprite { position: absolute; width: 0; height: 0; }

/* icon paint */
.f { fill: #d6d8d8; }
.g { fill: #b9bcbd; }
.w { fill: #eef1f2; }
.k { fill: #4e4e4e; }
.d { fill: #747474; }
.b { fill: #5b9fd0; }
.o { fill: #efc078; }
.r { fill: #ee5a48; }
.pb { fill: #b4cad2; }
.st { stroke: #4e4e4e; stroke-width: 1; }
.l, .t, .tw, .s, .bl, .lw, .rl, .td { fill: none; stroke: #b4b6b6; stroke-width: 1; }
.t { stroke: #d4d6d6; stroke-width: 1.3; }
.tw { stroke: #eef1f2; stroke-width: 2; }
.lw { stroke: #eef1f2; }
.s { stroke: #6c6e70; }
.bl { stroke: #5b9fd0; stroke-width: 1.3; }
.bo { fill: #5b9fd0; stroke: #3c4c58; stroke-width: 1; }
.rl { stroke: #ee5a48; stroke-width: 2; }
.td { stroke: #d4d6d6; stroke-width: 2; stroke-dasharray: 2 3; }
.teeth { stroke: #e2e4e4; stroke-width: 3; }
.hub { fill: #4e4e4e; stroke: #e2e4e4; stroke-width: 4; }

.toolbar { display: flex; justify-content: space-between; height: 43px; padding: 7px 0 0 67px; border-bottom: 1px solid #444; color: #f0f0f0; }
.cluster { display: flex; gap: 7px; }
.tool-group { display: flex; flex-direction: column; align-items: center; }
.tools { display: flex; }
.tools button { width: 30px; height: 18px; }
.toolbar h2 { font: 500 11px/17px Roboto, sans-serif; white-space: nowrap; }
.overflow { width: 22px; height: 31px; margin-left: -42px; }

.workspace { flex: 1; min-height: 0; display: flex; }
.palette { width: 82px; overflow: hidden; border-right: 1px solid #464646; font-family: "Liberation Sans", Arial, sans-serif; }
.palette-tabs { display: grid; grid-template-columns: 31px 31px 19px; height: 20px; }
.palette-tabs svg { width: 17px; height: 17px; }
.palette-tabs .shade { background: #484848; }
.palette-tabs .chev svg { width: 10px; height: 10px; }
.icon-grid { display: grid; grid-template-columns: repeat(3, 1fr); grid-auto-rows: 1fr; }
.icon-grid svg { width: 17px; height: 17px; }
.rows-2 { min-height: 54px; margin-bottom: 5px; }
.rows-4 { min-height: 114px; margin-bottom: 5px; }
.rows-8 { min-height: 228px; margin-bottom: 5px; }
.rows-last { min-height: 48px; }
.pal-head { display: flex; align-items: center; height: 20px; margin: 0 4px; border-top: 1px solid #434343; font-size: 9px; }
.pal-head span { flex: 1; white-space: nowrap; }
.pal-head .tri-r { width: 5px; height: 8px; margin: 0 4px 0 2px; }
.pal-head .tri-d { width: 8px; height: 5px; margin-right: 3px; }
.pal-head button svg { width: 9px; height: 9px; }

.document { flex: 1; min-width: 0; display: flex; flex-direction: column; }
.doc-tabs { display: flex; height: 22px; }
.doc-tabs button { width: 21px; }
.doc-tab { width: 115px; margin-top: 1px; padding-left: 3px; background: #696a6b; line-height: 21px; font-size: 10px; color: #f0f0f0; }
.canvas { flex: 1; position: relative; overflow: hidden; background: #21262e; font-family: "Noto Sans", sans-serif; }
.drawing { width: 100%; height: 100%; }
.drawing path { fill: none; stroke-width: 1; }
.drawing .axis { stroke: #1c1d57; stroke-width: 2; }
.drawing .wall { stroke: #24788a; stroke-width: 1.3; }
.drawing .swing { stroke: #2b97a8; stroke-dasharray: 8 1 4 1; }
.drawing .brace { stroke: #4695bd; }
.drawing .window-sel { fill: #17325f; stroke: #8198ae; }
.drawing .glow { fill: #3c7fb3; }
.drawing .glow-line { stroke: #75b2dd; stroke-width: 2; }
.drawing .glow-dark { stroke: #285a78; }
.drawing .grip { fill: #72b0dc; }
.drawing .grain { stroke: #a5bfce; stroke-dasharray: 1 2 1 3; }
.drawing .cross { stroke: #a8a8a8; }
.drawing .pick { fill: #14181f; stroke: #dedede; }
.drawing .pick-dot { fill: #4a8fc4; }
.drawing .ucs { stroke: #b8b8b4; }
.ucs-t { fill: #c4c4c0; font: 300 17px Lato, sans-serif; }
.view-label { position: absolute; left: 12px; top: 3px; display: flex; align-items: center; gap: 5px; color: #b4b6b8; line-height: 16px; }
.view-label button:first-child { width: 7px; margin-right: 5px; }
.view-label i { width: 1px; height: 11px; background: #a0a2a4; }

.viewcube { position: absolute; right: 12px; top: 11px; display: flex; flex-direction: column; align-items: center; gap: 17px; }
.viewcube > svg { width: 124px; height: 124px; }
.ring { fill: none; stroke: #474d55; stroke-width: 13; }
.face { fill: #ababac; }
.dir { fill: #b6b8ba; font: 700 18px "Open Sans", sans-serif; text-anchor: middle; }
.face-t { fill: #55585c; font: 700 11px "Liberation Sans", sans-serif; text-anchor: middle; }
.ucs-pick { width: 43px; height: 11px; gap: 6px; border-radius: 3px; background: #75787b; color: #24282e; font-size: 9px; line-height: 11px; }
.ucs-pick svg { width: 9px; height: 6px; fill: none; stroke: #2a2e34; }

.dyn-input { position: absolute; left: 691px; top: 87px; display: flex; gap: 3px; font-size: 11px; line-height: 15px; color: #1c1e20; }
.prompt { display: flex; align-items: center; justify-content: space-between; width: 161px; height: 17px; padding: 0 3px 0 1px; background: #a0a1a2; border: 1px solid #14171b; font-size: 10px; font-weight: 500; white-space: nowrap; }
.prompt button { width: 10px; height: 10px; background: #fff; border: 1px solid #303438; border-radius: 2px; }
.prompt .tri-d { width: 4px; height: 3px; filter: brightness(0.2); }
.field { width: 67px; height: 17px; padding: 1px; border: 1px solid #14171b; background: #97989a; display: flex; }
.field input { width: 61px; height: 13px; padding-left: 1px; }
.field.active { background: #fff; }
.field.active input { background: #16265c; color: #fff; font-weight: 600; }

.command { position: absolute; left: 50%; bottom: 0; width: 448px; margin-left: -224px; height: 22px; display: flex; align-items: center; background: #454745; color: #c0c2c0; font-size: 10px; }
.cmd-menu { width: 35px; height: 22px; gap: 2px; border-right: 1px solid #383a3a; }
.caret { width: 5px; height: 4px; }
.flip { transform: rotate(180deg); }
.command label { padding-left: 4px; white-space: nowrap; }
.command input { flex: 1; }
.help { width: 12px; height: 12px; border-radius: 6px; background: #a4a6a4; color: #3c3e3e; font-weight: 700; font-size: 9px; }
.up { width: 17px; }

.dock { width: 22px; display: flex; flex-direction: column; border-left: 1px solid #3e3e3e; }
.dock-open { height: 22px; }
.dock-open svg { width: 10px; height: 10px; }
.dock-tab { flex: 1; writing-mode: vertical-rl; transform: rotate(180deg); border-bottom: 1px solid #444; color: #d0d0d0; font-size: 11px; white-space: nowrap; }

.status { display: flex; height: 23px; align-items: stretch; border-top: 1px solid #464646; font-family: "Noto Sans", sans-serif; }
.pal-foot { width: 82px; display: flex; padding-left: 5px; }
.pal-foot button { width: 27px; }
.layouts { display: flex; font: 10px/21px Roboto, sans-serif; color: #a2a4a4; }
.layouts a { padding: 0 4px; border-right: 1px solid #424242; white-space: nowrap; }
.layouts .current { width: 52px; height: 20px; background: #6b6c6c; color: #f2f2f2; font-size: 11px; text-align: center; border: 0; }
.layouts button { width: 22px; }
.coords { margin-left: auto; padding-right: 4px; line-height: 21px; font-size: 11px; color: #b4b6b6; white-space: nowrap; }
.modes { display: flex; gap: 2px; padding-right: 5px; align-items: center; }
.modes button { width: 18px; height: 20px; }
.modes svg:not(.caret) { width: 17px; height: 17px; }
.modes .on { background: #5c8ab8; }
.modes .slim { width: 8px; }
.modes .scale { width: 15px; font-size: 10px; color: #b0b2b2; }
.modes svg.cog { width: 13px; height: 13px; }

.recorder { position: absolute; left: 0; top: 240px; width: 36px; display: flex; flex-direction: column; gap: 7px; }
.recorder time { height: 21px; line-height: 21px; border-radius: 0 3px 3px 0; background: #f2c571; color: #2a2b33; text-align: center; font-family: "DejaVu Sans Mono", monospace; font-weight: 700; font-size: 11px; }
.recorder button { height: 36px; border-radius: 0 3px 3px 0; background: #1b1e29; }
.recorder span { width: 15px; height: 14px; background: #f7634e; }
```
